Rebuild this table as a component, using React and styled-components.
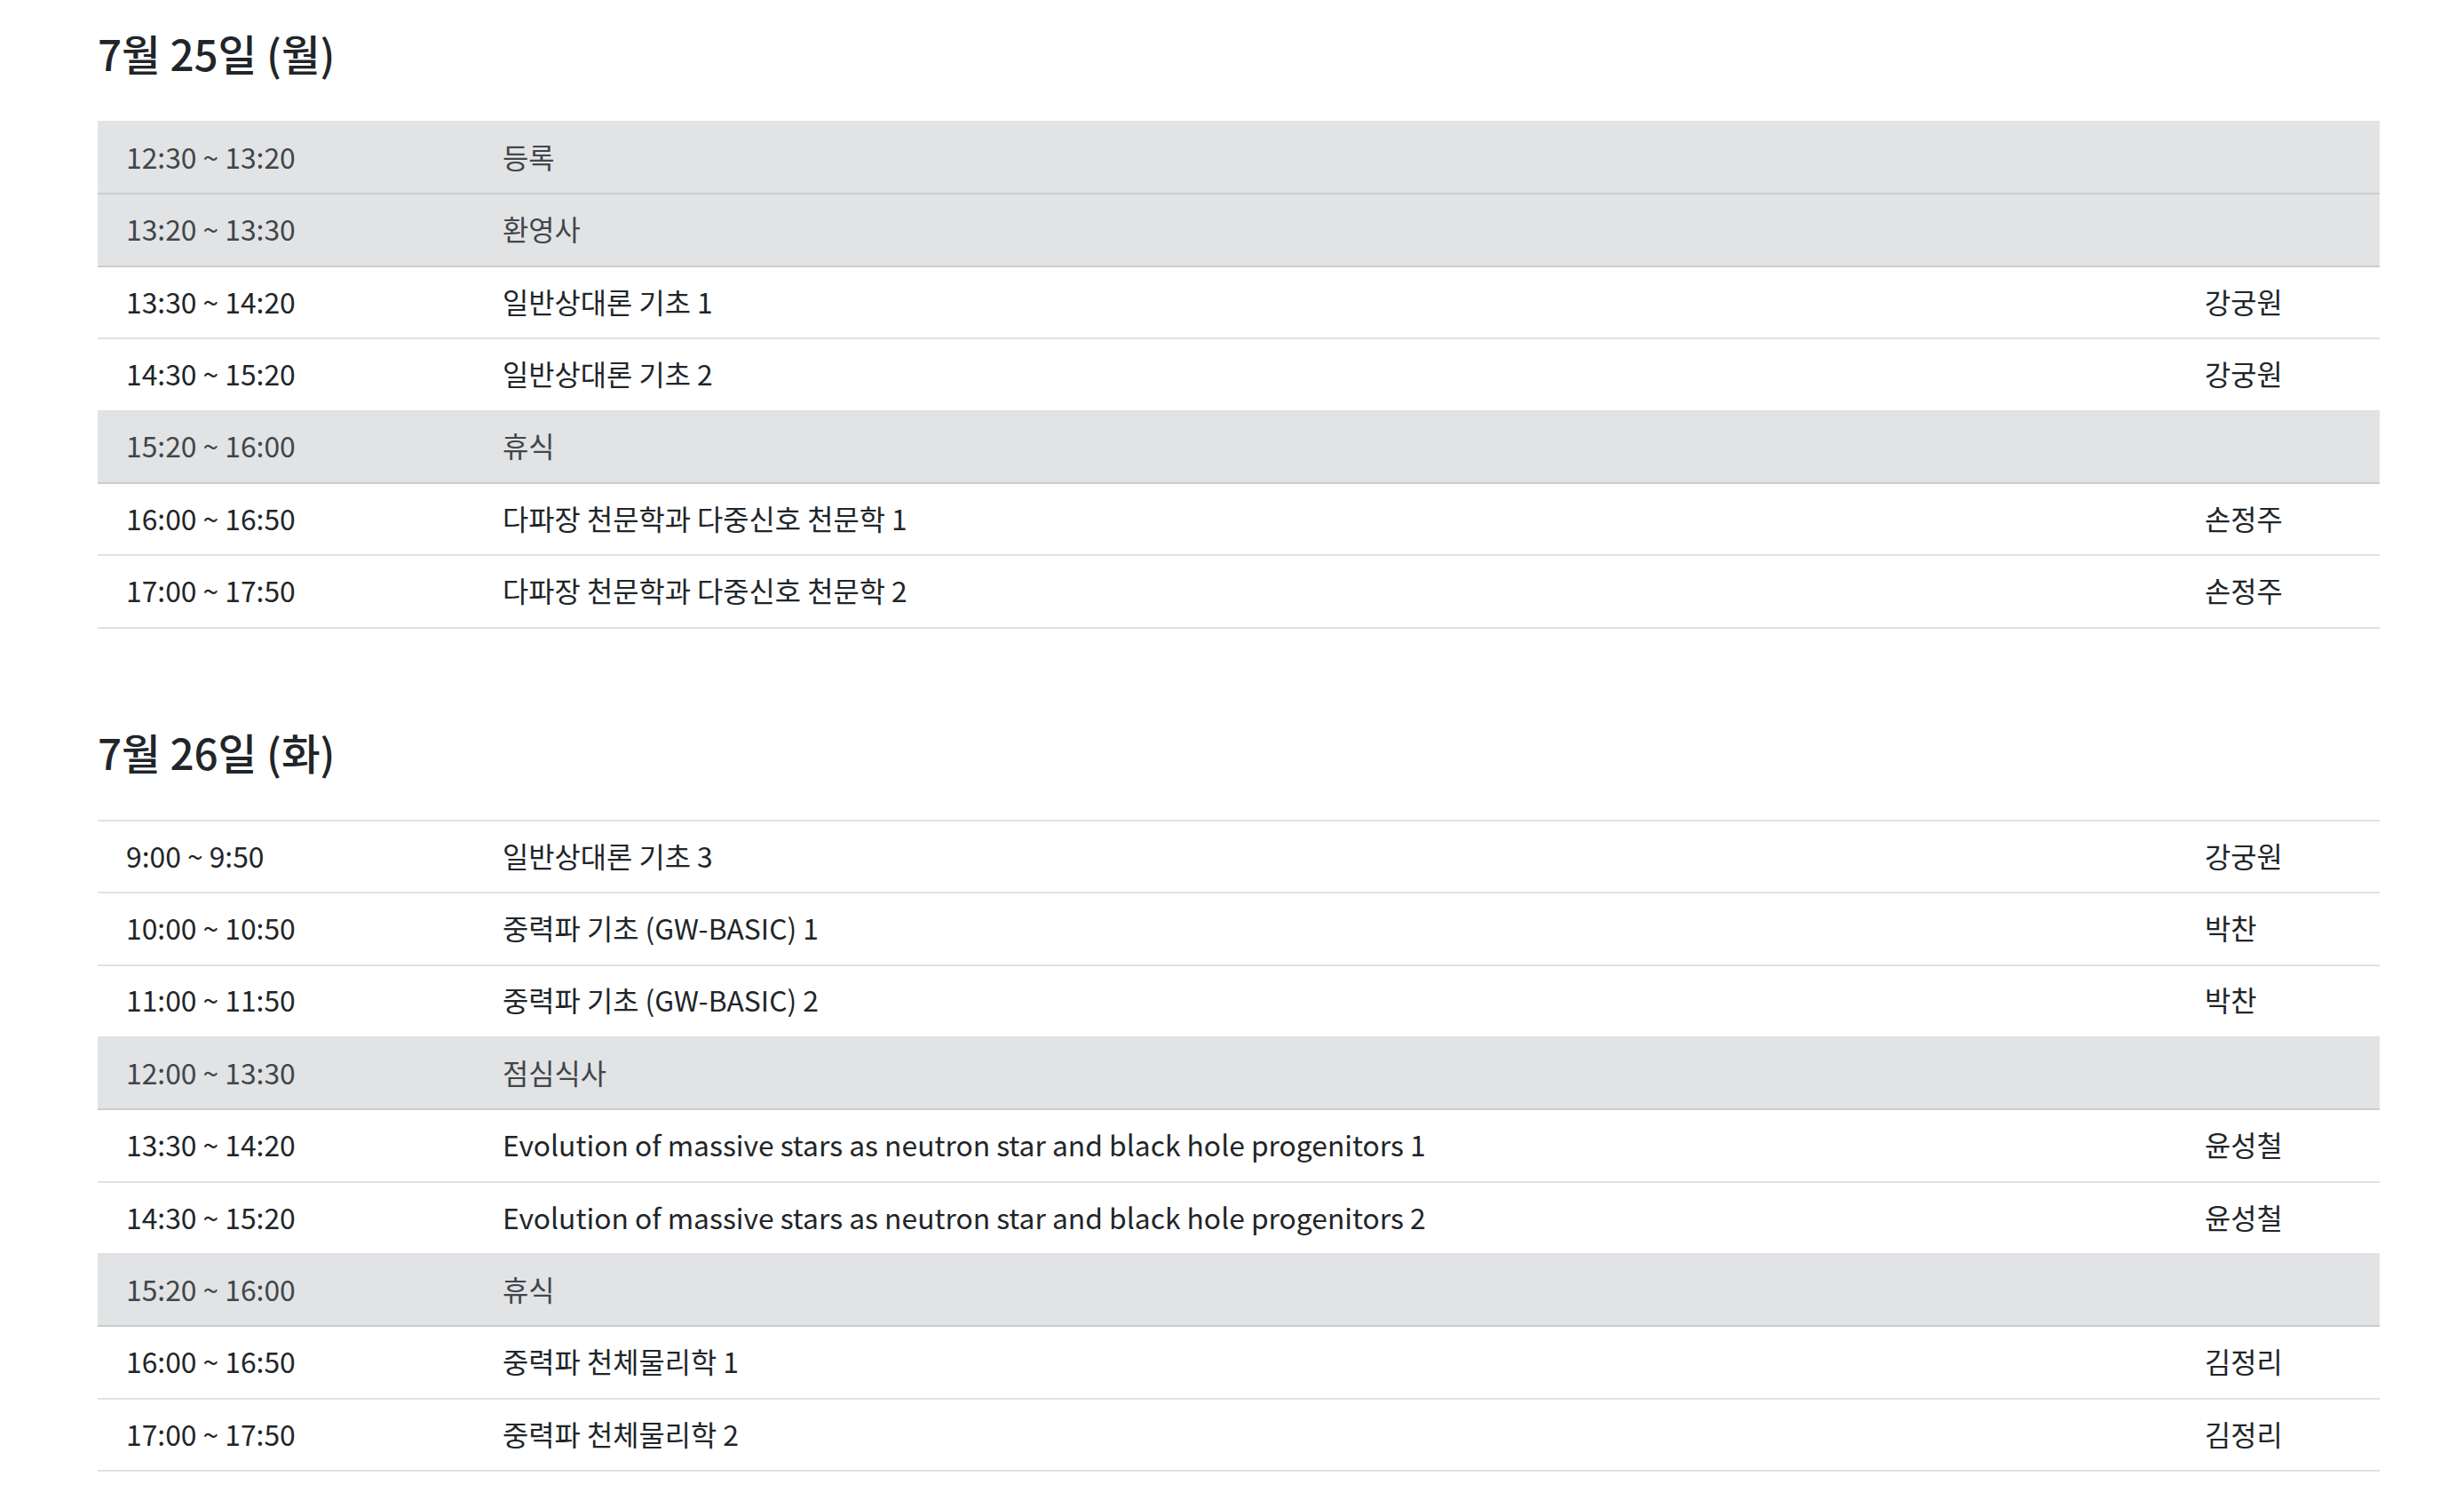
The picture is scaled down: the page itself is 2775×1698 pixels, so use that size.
import React from 'react';
import styled, { createGlobalStyle } from 'styled-components';

const GlobalStyle = createGlobalStyle`
  html, body {
    margin: 0;
    padding: 0;
    background: #ffffff;
  }
  body {
    font-family: "Noto Sans CJK KR", "Noto Sans", sans-serif;
    color: #212529;
  }
`;

const Page = styled.div`
  padding: 30px 95px 40px 110px;
  display: flex;
  flex-direction: column;
  gap: 109px;
`;

const Day = styled.section`
  display: flex;
  flex-direction: column;
`;

const DayTitle = styled.h3`
  margin: 0 0 46px;
  font-size: 47.5px;
  font-weight: 500;
  line-height: 60px;
  color: #212529;
`;

const Table = styled.div`
  display: flex;
  flex-direction: column;
  border-top: 2px solid ${props => (props.startsMuted ? '#e2e3e5' : '#dee2e6')};
`;

const Row = styled.div`
  display: grid;
  grid-template-columns: 424px 1fr 229px;
  height: 81.4px;
  box-sizing: border-box;
  align-items: center;
  background: ${props => (props.muted ? '#e2e3e5' : '#ffffff')};
  color: ${props => (props.muted ? '#41464b' : '#212529')};
  border-bottom: 2px solid ${props => (props.muted ? '#cbccce' : '#dee2e6')};
`;

const Cell = styled.div`
  padding-left: 32px;
  font-size: 31.8px;
  line-height: 1.5;
  white-space: nowrap;
  transform: translateY(-1px);
`;

const schedule = [
  {
    title: '7월 25일 (월)',
    rows: [
      { time: '12:30 ~ 13:20', topic: '등록', muted: true },
      { time: '13:20 ~ 13:30', topic: '환영사', muted: true },
      { time: '13:30 ~ 14:20', topic: '일반상대론 기초 1', speaker: '강궁원' },
      { time: '14:30 ~ 15:20', topic: '일반상대론 기초 2', speaker: '강궁원' },
      { time: '15:20 ~ 16:00', topic: '휴식', muted: true },
      { time: '16:00 ~ 16:50', topic: '다파장 천문학과 다중신호 천문학 1', speaker: '손정주' },
      { time: '17:00 ~ 17:50', topic: '다파장 천문학과 다중신호 천문학 2', speaker: '손정주' },
    ],
  },
  {
    title: '7월 26일 (화)',
    rows: [
      { time: '9:00 ~ 9:50', topic: '일반상대론 기초 3', speaker: '강궁원' },
      { time: '10:00 ~ 10:50', topic: '중력파 기초 (GW-BASIC) 1', speaker: '박찬' },
      { time: '11:00 ~ 11:50', topic: '중력파 기초 (GW-BASIC) 2', speaker: '박찬' },
      { time: '12:00 ~ 13:30', topic: '점심식사', muted: true },
      { time: '13:30 ~ 14:20', topic: 'Evolution of massive stars as neutron star and black hole progenitors 1', speaker: '윤성철' },
      { time: '14:30 ~ 15:20', topic: 'Evolution of massive stars as neutron star and black hole progenitors 2', speaker: '윤성철' },
      { time: '15:20 ~ 16:00', topic: '휴식', muted: true },
      { time: '16:00 ~ 16:50', topic: '중력파 천체물리학 1', speaker: '김정리' },
      { time: '17:00 ~ 17:50', topic: '중력파 천체물리학 2', speaker: '김정리' },
    ],
  },
];

export default function App() {
  return (
    <>
      <GlobalStyle />
      <Page>
        {schedule.map(day => (
          <Day key={day.title}>
            <DayTitle>{day.title}</DayTitle>
            <Table startsMuted={day.rows[0].muted}>
              {day.rows.map((row, i) => (
                <Row key={i} muted={row.muted}>
                  <Cell>{row.time}</Cell>
                  <Cell>{row.topic}</Cell>
                  <Cell>{row.speaker}</Cell>
                </Row>
              ))}
            </Table>
          </Day>
        ))}
      </Page>
    </>
  );
}
